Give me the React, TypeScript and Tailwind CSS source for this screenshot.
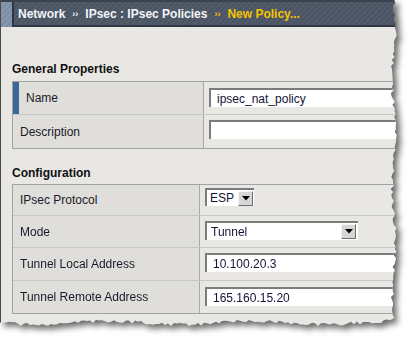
import React from "react";

const font = "font-['Liberation_Sans',Arial,sans-serif]";

// torn paper outline for the right and bottom edge
function tornEdge() {
  let seed = 11;
  const rnd = () => {
    seed = (seed * 9301 + 49297) % 233280;
    return seed / 233280;
  };
  const pts: string[] = ["0px 0px"];
  for (let y = 0; y <= 320; y += 3) {
    const wave = Math.sin(y / 17) * 1.5;
    pts.push(`${(392 + wave + rnd() * 3.5).toFixed(1)}px ${y}px`);
  }
  for (let x = 390; x >= 0; x -= 3) {
    const wave = Math.sin(x / 23) * 1.8;
    pts.push(`${x}px ${(321 + wave + rnd() * 3.5).toFixed(1)}px`);
  }
  return `polygon(${pts.join(",")})`;
}

function DropButton() {
  return (
    <div className="flex h-[15px] w-[15px] items-center justify-center border border-t-[#f4f4f4] border-l-[#f4f4f4] border-r-[#6e6e6e] border-b-[#6e6e6e] bg-[#d6d6d6]">
      <svg width="8" height="5" viewBox="0 0 8 5">
        <path d="M0 0h8L4 4.5z" fill="#000" />
      </svg>
    </div>
  );
}

function TextBox({ value, top = 6 }: { value: string; top?: number }) {
  return (
    <div
      className="flex h-[19px] w-[220px] items-center border-t-2 border-l-2 border-t-[#7c7c7c] border-l-[#7c7c7c] bg-white pl-[6px] text-[12px] text-[#141438]"
      style={{ marginTop: top }}
    >
      {value}
    </div>
  );
}

function Row({
  label,
  children,
  h,
  marker = false,
  labelW,
  last = false,
}: {
  label: string;
  children?: React.ReactNode;
  h: number;
  marker?: boolean;
  labelW: number;
  last?: boolean;
}) {
  return (
    <div
      className={`flex ${last ? "" : "border-b border-[#c6c6c6]"}`}
      style={{ height: h }}
    >
      <div
        className="flex shrink-0 items-center border-r border-[#a9a9a9] bg-[#dfdedb] text-[12px] text-[#1a1a28]"
        style={{ width: labelW }}
      >
        {marker ? <div className="h-full w-[6px] bg-[#3b6997]" /> : null}
        <span className="pl-[7px]">{label}</span>
      </div>
      <div className="flex flex-1 items-start pl-[5px]">{children}</div>
    </div>
  );
}

export default function App() {
  return (
    <div className={`h-[344px] w-[413px] overflow-hidden bg-white ${font}`}>
      <div className="drop-shadow-[4px_4px_3px_rgba(0,0,0,0.6)]">
        <div
          className="h-[330px] w-[400px] border-l border-[#4a4a4a] bg-[#e8e7e3]"
          style={{ clipPath: tornEdge() }}
        >
          {/* header */}
          <div className="flex h-[27px] flex-col">
            <div className="h-[2px] bg-[#3a424e]" />
            <div className="flex flex-1">
              <div className="w-[11px] bg-[repeating-linear-gradient(135deg,#7b8ea3_0px,#7b8ea3_2px,#8698ac_2px,#8698ac_4px)]" />
              <div className="flex flex-1 items-center border-b-2 border-l-2 border-[#2f3641] bg-[repeating-linear-gradient(135deg,#4a5462_0px,#4a5462_2px,#515b69_2px,#515b69_4px)] pl-[4px] text-[12px] font-bold text-[#f2f4f8]">
                <span>Network</span>
                <span className="px-[7px] pt-[2px] text-[9px]">››</span>
                <span>IPsec : IPsec Policies</span>
                <span className="px-[7px] pt-[2px] text-[9px] text-[#f2c200]">››</span>
                <span className="text-[#f5c400]">New Policy...</span>
              </div>
            </div>
          </div>

          <div className="pl-[11px]">
            <div className="pt-[35px] pb-[4px] text-[12px] leading-[15px] font-bold text-[#111]">
              General Properties
            </div>
            <div className="w-[400px] border border-[#a2a2a2]">
              <Row label="Name" h={33} marker labelW={191}>
                <TextBox value="ipsec_nat_policy" top={6} />
              </Row>
              <Row label="Description" h={33} labelW={191} last>
                <TextBox value="" top={5} />
              </Row>
            </div>

            <div className="pt-[17px] pb-[3px] text-[12px] leading-[15px] font-bold text-[#111]">
              Configuration
            </div>
            <div className="w-[400px] border border-[#a2a2a2]">
              <Row label="IPsec Protocol" h={31} labelW={187}>
                <div className="mt-[3px] flex h-[18px] items-center border-t-2 border-l-2 border-t-[#7c7c7c] border-l-[#7c7c7c] bg-white pr-px text-[12px] text-[#141438]">
                  <span className="pl-[3px] pr-[4px]">ESP</span>
                  <DropButton />
                </div>
              </Row>
              <Row label="Mode" h={32} labelW={187}>
                <div className="mt-[5px] flex h-[19px] w-[153px] items-center justify-between border-t-2 border-l-2 border-t-[#7c7c7c] border-l-[#7c7c7c] bg-white pr-[2px] text-[12px] text-[#141438]">
                  <span className="pl-[4px]">Tunnel</span>
                  <DropButton />
                </div>
              </Row>
              <Row label="Tunnel Local Address" h={33} labelW={187}>
                <TextBox value="10.100.20.3" top={5} />
              </Row>
              <Row label="Tunnel Remote Address" h={32} labelW={187} last>
                <TextBox value="165.160.15.20" top={6} />
              </Row>
            </div>
          </div>
        </div>
      </div>
    </div>
  );
}
